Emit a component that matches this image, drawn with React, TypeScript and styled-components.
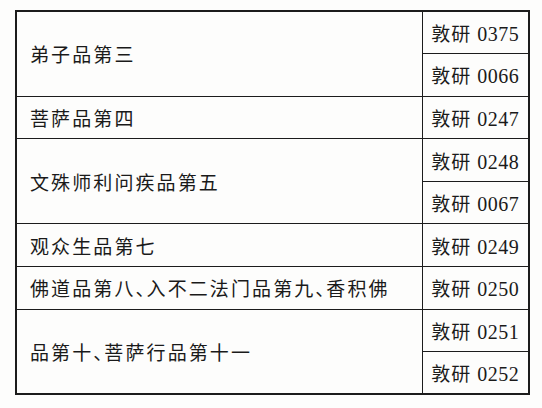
import styled, { createGlobalStyle } from "styled-components";

const GlobalStyle = createGlobalStyle`
  html, body {
    margin: 0;
    padding: 0;
    background: #fdfdfc;
  }
`;

type Chapter = {
  title: string;
  codes: string[];
};

const chapters: Chapter[] = [
  { title: "弟子品第三", codes: ["0375", "0066"] },
  { title: "菩萨品第四", codes: ["0247"] },
  { title: "文殊师利问疾品第五", codes: ["0248", "0067"] },
  { title: "观众生品第七", codes: ["0249"] },
  { title: "佛道品第八、入不二法门品第九、香积佛", codes: ["0250"] },
  { title: "品第十、菩萨行品第十一", codes: ["0251", "0252"] },
];

// the scan sets the enumeration comma half-wide
const renderTitle = (title: string) =>
  title.split("、").flatMap((part, i) =>
    i === 0 ? [part] : [<Comma key={i}>、</Comma>, part]
  );

const App = (): JSX.Element => {
  return (
    <>
      <GlobalStyle />
      <Page>
        <Table>
          <colgroup>
            <col style={{ width: 406 }} />
            <col style={{ width: 107 }} />
          </colgroup>
          <tbody>
            {chapters.map((ch) =>
              ch.codes.map((code, i) => (
                <Row key={code}>
                  {i === 0 && (
                    <TitleCell rowSpan={ch.codes.length}>
                      {renderTitle(ch.title)}
                    </TitleCell>
                  )}
                  <CodeCell>
                    敦研 <Digits>{code}</Digits>
                  </CodeCell>
                </Row>
              ))
            )}
          </tbody>
        </Table>
      </Page>
    </>
  );
};

export default App;

const Page = styled.div`
  width: 542px;
  height: 408px;
  padding: 10px 0 0 15px;
  box-sizing: border-box;
`;

const Table = styled.table`
  width: 513px;
  table-layout: fixed;
  border-collapse: collapse;
  border: 2px solid #1c1c1c;
  color: #1a1a1a;
  font-family: "Liberation Serif", "Noto Sans CJK SC", serif;
  font-size: 19px;
`;

const Row = styled.tr`
  height: 42.6px;
`;

const TitleCell = styled.td`
  border: 1.5px solid #1c1c1c;
  padding: 0 0 0 13px;
  letter-spacing: 2.1px;
  white-space: nowrap;
  vertical-align: middle;
`;

const Comma = styled.span`
  font-family: "Noto Sans CJK SC", sans-serif;
  font-feature-settings: "halt";
  letter-spacing: 0;
  margin-right: 1.5px;
`;

const CodeCell = styled.td`
  border: 1.5px solid #1c1c1c;
  padding: 0;
  text-align: center;
  letter-spacing: 1px;
  white-space: nowrap;
  vertical-align: middle;
`;

const Digits = styled.span`
  font-size: 20px;
  letter-spacing: 0.5px;
`;
